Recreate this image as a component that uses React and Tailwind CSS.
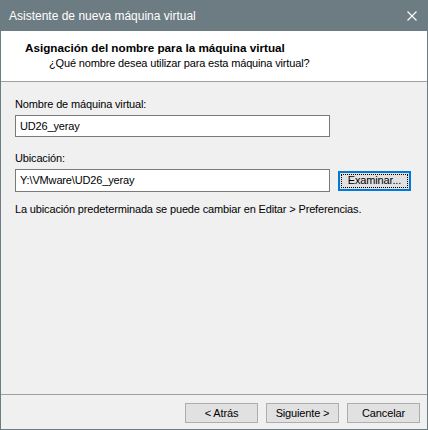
export default function App() {
  const font = { fontFamily: '"Liberation Sans", Arial, sans-serif' }
  return (
    <div className="w-[428px] h-[430px] flex flex-col bg-[#6d7c82] text-[11px] tracking-[-0.15px] text-black" style={font}>
      {/* Title bar */}
      <div className="h-[31px] flex items-center justify-between pl-[9px] pr-[11px] shrink-0">
        <span className="text-[12px] tracking-normal text-white leading-none">Asistente de nueva máquina virtual</span>
        <svg width="10" height="10" viewBox="0 0 10 10">
          <path d="M0.5 0.5 L9.5 9.5 M9.5 0.5 L0.5 9.5" stroke="#ffffff" strokeWidth="1.1" fill="none" />
        </svg>
      </div>

      <div className="flex-1 flex flex-col mx-px mb-px bg-[#f0f0f0]">
        {/* Header */}
        <div className="h-[51px] bg-white border-b border-[#a0a0a0] pt-[9px] shrink-0">
          <div className="pl-[24px] font-bold text-[11.7px] tracking-normal leading-[15px]">Asignación del nombre para la máquina virtual</div>
          <div className="pl-[48px] leading-[15px] mt-[1px]">¿Qué nombre desea utilizar para esta máquina virtual?</div>
        </div>

        {/* Body */}
        <div className="flex-1 pl-[14px] pt-[16px]">
          <div className="leading-[13px]">Nombre de máquina virtual:</div>
          <div className="mt-[4px] w-[315px] h-[22px] bg-white border border-[#7a7a7a] flex items-center pl-[4px]">UD26_yeray</div>

          <div className="mt-[15px] leading-[13px]">Ubicación:</div>
          <div className="mt-[4px] flex items-center gap-[8px]">
            <div className="w-[315px] h-[23px] bg-white border border-[#7a7a7a] flex items-center pl-[4px]">Y:\VMware\UD26_yeray</div>
            <button className="w-[73px] h-[20px] bg-[#e1e1e1] border-2 border-[#0078d7] p-px flex">
              <span className="flex-1 border border-dotted border-black flex items-center justify-center">Examinar...</span>
            </button>
          </div>
          <div className="mt-[11px] leading-[13px]">La ubicación predeterminada se puede cambiar en Editar &gt; Preferencias.</div>
        </div>

        {/* Footer */}
        <div className="border-t border-[#a0a0a0] h-[35px] flex items-start justify-end gap-[8px] pt-[8px] pr-[7px] shrink-0">
          <button className="w-[73px] h-[20px] bg-[#e1e1e1] border border-[#adadad] flex items-center justify-center">&lt; Atrás</button>
          <button className="w-[73px] h-[20px] bg-[#e1e1e1] border border-[#adadad] flex items-center justify-center">Siguiente &gt;</button>
          <button className="w-[73px] h-[20px] bg-[#e1e1e1] border border-[#adadad] flex items-center justify-center">Cancelar</button>
        </div>
      </div>
    </div>
  )
}
